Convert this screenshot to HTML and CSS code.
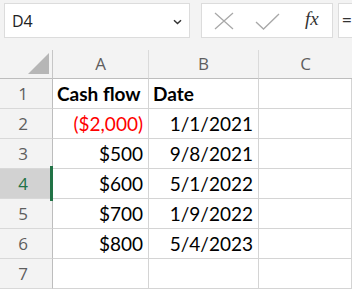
FILE: index.html
```html
<!DOCTYPE html>
<html>
<head>
<meta charset="utf-8">
<link rel="stylesheet" href="styles.css">
</head>
<body>
<div class="toolbar">
  <div class="namebox">
    <span class="ref">D4</span>
    <svg class="chev" width="9" height="6" viewBox="0 0 9 6"><path d="M1 1.2 L4.5 4.5 L8 1.2" fill="none" stroke="#333" stroke-width="1.5"/></svg>
  </div>
  <div class="fbuttons">
    <svg class="ico-x" width="20" height="18" viewBox="0 0 20 18"><path d="M1 1 L19 17 M19 1 L1 17" stroke="#a8a8a8" stroke-width="1.3" fill="none"/></svg>
    <svg class="ico-check" width="25" height="17" viewBox="0 0 25 17"><path d="M1 9 L8.5 16 L24 1" stroke="#a8a8a8" stroke-width="1.3" fill="none"/></svg>
    <span class="fx">fx</span>
  </div>
  <div class="formula"><span class="eq">=</span></div>
</div>
<div class="grid">
  <div class="corner"><span class="tri"></span></div>
  <div class="colhead">A</div>
  <div class="colhead">B</div>
  <div class="colhead last">C</div>

  <div class="rowhead">1</div>
  <div class="cell bold left">Cash flow</div>
  <div class="cell bold left">Date</div>
  <div class="cell"></div>

  <div class="rowhead">2</div>
  <div class="cell neg">($2,000)</div>
  <div class="cell">1/1/2021</div>
  <div class="cell"></div>

  <div class="rowhead">3</div>
  <div class="cell">$500</div>
  <div class="cell">9/8/2021</div>
  <div class="cell"></div>

  <div class="rowhead active">4</div>
  <div class="cell">$600</div>
  <div class="cell">5/1/2022</div>
  <div class="cell"></div>

  <div class="rowhead">5</div>
  <div class="cell">$700</div>
  <div class="cell">1/9/2022</div>
  <div class="cell"></div>

  <div class="rowhead">6</div>
  <div class="cell">$800</div>
  <div class="cell">5/4/2023</div>
  <div class="cell"></div>

  <div class="rowhead">7</div>
  <div class="cell"></div>
  <div class="cell"></div>
  <div class="cell"></div>
</div>
</body>
</html>
```
FILE: styles.css
```css
html, body {
  margin: 0;
  padding: 0;
  background: #f3f3f3;
  overflow: hidden;
}
body {
  width: 352px;
  height: 289px;
}
.toolbar {
  display: flex;
  align-items: flex-start;
  height: 50px;
  padding: 3px 0 0 4px;
  box-sizing: border-box;
  white-space: nowrap;
}
.namebox {
  width: 186px;
  height: 35px;
  box-sizing: border-box;
  background: #fff;
  border: 1px solid #dcdcdc;
  display: flex;
  align-items: center;
  padding: 0 7px 0 7px;
}
.ref {
  font-family: "Open Sans", "Noto Sans", sans-serif;
  font-size: 16px;
  color: #222;
  flex: 1;
  margin-top: 1px;
}
.chev {
  display: block;
  margin-top: 2px;
}
.fbuttons {
  margin-left: 11px;
  width: 132px;
  height: 35px;
  box-sizing: border-box;
  background: #fff;
  border: 1px solid #dcdcdc;
  display: flex;
  align-items: center;
  position: relative;
}
.ico-x {
  position: absolute;
  left: 12px;
  top: 8px;
}
.ico-check {
  position: absolute;
  left: 53px;
  top: 9px;
}
.fx {
  position: absolute;
  left: 103px;
  top: 4px;
  font-family: "Liberation Serif", "DejaVu Serif", serif;
  font-style: italic;
  font-size: 19px;
  color: #333;
}
.formula {
  margin-left: 5px;
  flex: 1;
  height: 35px;
  box-sizing: border-box;
  background: #fff;
  border: 1px solid #dcdcdc;
  border-right: none;
  padding-left: 3px;
  display: flex;
  align-items: center;
}
.eq {
  font-family: "Open Sans", sans-serif;
  font-size: 17px;
  color: #333;
  margin-top: -2px;
}
.grid {
  display: grid;
  grid-template-columns: 53px 96px 110px 1fr;
  grid-template-rows: 29px repeat(7, 30px);
}
.corner {
  position: relative;
  border-right: 1px solid #c6c6c6;
  border-bottom: 1px solid #bdbdbd;
}
.tri {
  position: absolute;
  left: 28px;
  top: 3px;
  width: 0;
  height: 0;
  border-left: 21px solid transparent;
  border-bottom: 21px solid #b6b6b6;
}
.colhead {
  font-family: "Open Sans", "Noto Sans", sans-serif;
  font-size: 17px;
  color: #5e5e5e;
  text-align: center;
  line-height: 28px;
  border-right: 1px solid #dadada;
  border-bottom: 1px solid #bdbdbd;
}
.colhead.last {
  border-right: none;
}
.rowhead {
  font-family: "Open Sans", "Noto Sans", sans-serif;
  font-size: 17px;
  color: #5e5e5e;
  text-align: center;
  line-height: 30px;
  padding-right: 6px;
  border-right: 1px solid #bdbdbd;
  border-bottom: 1px solid #d8d8d8;
  box-sizing: border-box;
}
.rowhead.active {
  background: #d2d2d2;
  color: #217346;
  position: relative;
}
.rowhead.active::after {
  content: "";
  position: absolute;
  right: -1px;
  top: -3px;
  width: 3px;
  height: 35px;
  background: #217346;
}
.cell {
  background: #fff;
  font-family: Lato, "Liberation Sans", sans-serif;
  font-size: 19px;
  color: #000;
  text-align: right;
  line-height: 30px;
  padding: 0 5px;
  border-right: 1px solid #d4d4d4;
  border-bottom: 1px solid #d4d4d4;
  box-sizing: border-box;
  white-space: nowrap;
  overflow: hidden;
}
.cell.left {
  text-align: left;
  padding-left: 4px;
}
.cell.bold {
  font-weight: bold;
}
.cell.neg {
  color: #ff0000;
}
```
